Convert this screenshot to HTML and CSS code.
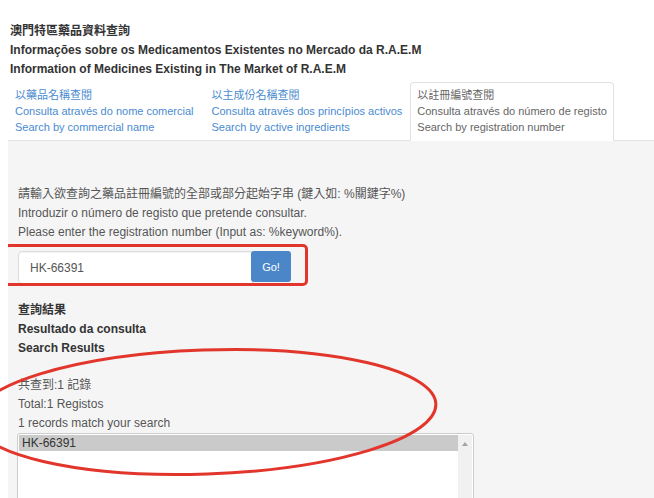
FILE: index.html
```html
<!DOCTYPE html>
<html lang="zh-Hant">
<head>
    <meta charset="UTF-8">
    <meta name="viewport" content="width=device-width, initial-scale=1.0">
    <title>澳門特區藥品資料查詢</title>
    <link rel="stylesheet" href="styles.css">
</head>
<body>
    <div class="page">
        <div class="title">
            <div>澳門特區藥品資料查詢</div>
            <div>Informações sobre os Medicamentos Existentes no Mercado da R.A.E.M</div>
            <div>Information of Medicines Existing in The Market of R.A.E.M</div>
        </div>

        <ul class="tabs">
            <li><a href="#">以藥品名稱查閱<br>Consulta através do nome comercial<br>Search by commercial name</a></li>
            <li><a href="#">以主成份名稱查閱<br>Consulta através dos princípios activos<br>Search by active ingredients</a></li>
            <li class="active"><a href="#">以註冊編號查閱<br>Consulta através do número de registo<br>Search by registration number</a></li>
        </ul>

        <div class="panel">
            <div class="hint">
                <div>請輸入欲查詢之藥品註冊編號的全部或部分起始字串 (鍵入如: %關鍵字%)</div>
                <div>Introduzir o número de registo que pretende consultar.</div>
                <div>Please enter the registration number (Input as: %keyword%).</div>
            </div>

            <form class="search" onsubmit="return false">
                <input type="text" value="HK-66391">
                <button type="submit">Go!</button>
                <!-- red highlight drawn over the search row -->
                <span class="mark-box"></span>
            </form>

            <div class="results-title">
                <div>查詢結果</div>
                <div>Resultado da consulta</div>
                <div>Search Results</div>
            </div>

            <div class="summary">
                <div>共查到:1 記錄</div>
                <div>Total:1 Registos</div>
                <div>1 records match your search</div>
            </div>

            <div class="listbox">
                <div class="list">
                    <div class="option selected">HK-66391</div>
                </div>
                <div class="scrollbar"><span class="arrow-up"></span></div>
            </div>
        </div>

        <!-- red circle drawn round the results -->
        <svg class="mark-ellipse" width="654" height="498" viewBox="0 0 654 498">
            <ellipse cx="205" cy="412" rx="231" ry="62" transform="rotate(-2 205 412)"
                     fill="none" stroke="#e2362c" stroke-width="3"/>
        </svg>
    </div>
</body>
</html>
```

FILE: styles.css
```css
body {
    margin: 0;
    padding: 0;
    background-color: #fff;
    font-family: "Liberation Sans", "Noto Sans CJK TC", sans-serif;
    color: #555;
    overflow: hidden;
}

.page {
    position: relative;
    height: 498px;
    padding-top: 22px;
    box-sizing: border-box;
    display: flex;
    flex-direction: column;
    overflow: hidden;
}

.title {
    margin-left: 10px;
    font-size: 12px;
    line-height: 19px;
    font-weight: bold;
    color: #333;
}

.tabs {
    list-style: none;
    margin: 3px 0 0 8px;
    padding: 0;
    display: flex;
    border-bottom: 1px solid #e2e2e2;
}

.tabs li {
    margin-bottom: -1px;
    margin-right: 1px;
}

.tabs li:first-child {
    margin-right: 4px;
}

.tabs a {
    display: block;
    padding: 4px 6px 5px;
    font-size: 11px;
    line-height: 16px;
    color: #4a8bd0;
    text-decoration: none;
    border: 1px solid transparent;
    border-radius: 4px 4px 0 0;
}

.tabs li.active a {
    color: #666;
    background-color: #fff;
    border-color: #e2e2e2 #e2e2e2 transparent;
}

.panel {
    flex: 1;
    min-height: 0;
    overflow: hidden;
    margin-left: 8px;
    background-color: #f5f5f5;
    padding: 44px 10px 0;
}

.hint {
    font-size: 12px;
    line-height: 19px;
    color: #555;
}

.search {
    position: relative;
    display: flex;
    align-items: flex-start;
    margin-top: 9px;
    width: 275px;
}

.search input {
    width: 235px;
    height: 33px;
    box-sizing: border-box;
    border: 1px solid #ddd;
    border-radius: 4px 0 0 4px;
    padding: 0 11px;
    font-family: inherit;
    font-size: 12px;
    color: #555;
    background-color: #fff;
    box-shadow: inset 0 1px 1px rgba(0, 0, 0, 0.05);
}

.search button {
    width: 40px;
    height: 31px;
    border: none;
    border-radius: 3px;
    background-color: #4b87c8;
    color: #fff;
    font-family: inherit;
    font-size: 11px;
    margin-left: -2px;
    padding: 0;
}

.mark-box {
    position: absolute;
    left: -14px;
    top: -7px;
    width: 304px;
    height: 42px;
    box-sizing: border-box;
    border: 3px solid #e2362c;
    border-radius: 5px;
}

.results-title {
    margin-top: 17px;
    font-size: 12px;
    line-height: 19px;
    font-weight: bold;
    color: #333;
}

.summary {
    margin-top: 18px;
    font-size: 12px;
    line-height: 19px;
    color: #555;
}

.listbox {
    display: flex;
    width: 457px;
    height: 100px;
    margin-left: -1px;
    box-sizing: border-box;
    border: 1px solid #ccc;
    border-radius: 3px;
    background-color: #fff;
    padding: 1px;
}

.list {
    flex: 1;
}

.option {
    height: 16px;
    line-height: 16px;
    padding-left: 3px;
    font-size: 12px;
    color: #333;
}

.option.selected {
    background-color: #cacaca;
}

.scrollbar {
    width: 14px;
    background-color: #f1f1f1;
    display: flex;
    justify-content: center;
}

.arrow-up {
    margin-top: 7px;
    width: 0;
    height: 0;
    border-left: 3px solid transparent;
    border-right: 3px solid transparent;
    border-bottom: 4px solid #a3a3a3;
}

.mark-ellipse {
    position: absolute;
    left: 0;
    top: 0;
    pointer-events: none;
}
```
